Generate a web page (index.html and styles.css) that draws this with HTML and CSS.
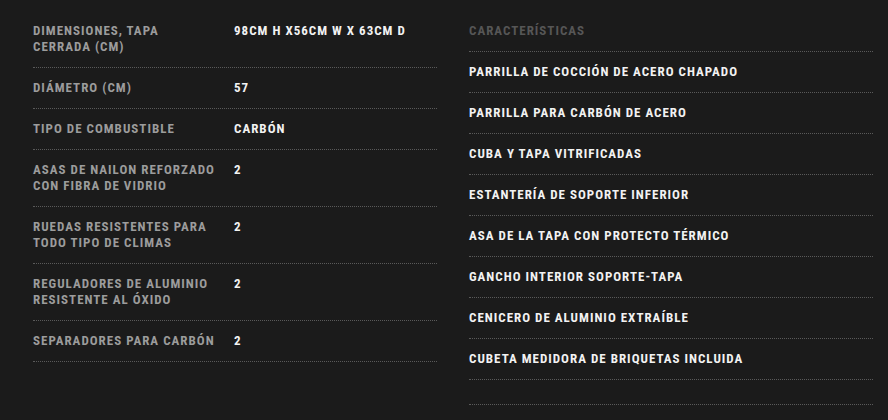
FILE: index.html
```html
<!DOCTYPE html>
<html lang="es">
<head>
<meta charset="utf-8">
<link rel="stylesheet" href="styles.css">
</head>
<body>
<div class="page">
  <section class="specs">
    <div class="row"><div class="label">Dimensiones, tapa cerrada (cm)</div><div class="value">98cm H x56cm W x 63cm D</div></div>
    <div class="row"><div class="label">Diámetro (cm)</div><div class="value">57</div></div>
    <div class="row"><div class="label">Tipo de combustible</div><div class="value">Carbón</div></div>
    <div class="row"><div class="label">Asas de nailon reforzado con fibra de vidrio</div><div class="value">2</div></div>
    <div class="row"><div class="label">Ruedas resistentes para todo tipo de climas</div><div class="value">2</div></div>
    <div class="row"><div class="label">Reguladores de aluminio resistente al óxido</div><div class="value">2</div></div>
    <div class="row"><div class="label">Separadores para carbón</div><div class="value">2</div></div>
  </section>
  <section class="features">
    <h3 class="feat-title">Características</h3>
    <ul class="feat-list">
      <li>Parrilla de cocción de acero chapado</li>
      <li>Parrilla para carbón de acero</li>
      <li>Cuba y tapa vitrificadas</li>
      <li>Estantería de soporte inferior</li>
      <li>Asa de la tapa con protecto térmico</li>
      <li>Gancho interior soporte-tapa</li>
      <li>Cenicero de aluminio extraíble</li>
      <li>Cubeta medidora de briquetas incluida</li>
      <li></li>
    </ul>
  </section>
</div>
</body>
</html>
```
FILE: styles.css
```css
html, body {
  margin: 0;
  padding: 0;
  background: #1b1b1b;
}
body {
  font-family: "Roboto Condensed", "DejaVu Sans Condensed", sans-serif;
  font-weight: bold;
  font-size: 13px;
  text-transform: uppercase;
  letter-spacing: 1px;
}
.page {
  display: grid;
  grid-template-columns: 404px 404px;
  column-gap: 32px;
  padding: 11px 0 0 33px;
}
.row {
  display: flex;
  padding: 12px 0;
  line-height: 16px;
  border-bottom: 1px dotted #5a5a5a;
}
.label {
  width: 201px;
  flex: none;
  color: #9c9c9c;
  padding-right: 16px;
  box-sizing: border-box;
}
.value {
  color: #f2f2f2;
}
.feat-title {
  margin: 0;
  padding: 12px 0;
  font-size: 13px;
  line-height: 16px;
  color: #565656;
  border-bottom: 1px dotted #5a5a5a;
}
.feat-list {
  list-style: none;
  margin: 0;
  padding: 0;
}
.feat-list li {
  padding: 12px 0;
  line-height: 16px;
  color: #f2f2f2;
  border-bottom: 1px dotted #5a5a5a;
}
.feat-list li:empty {
  line-height: 0;
  height: 0;
}
```
